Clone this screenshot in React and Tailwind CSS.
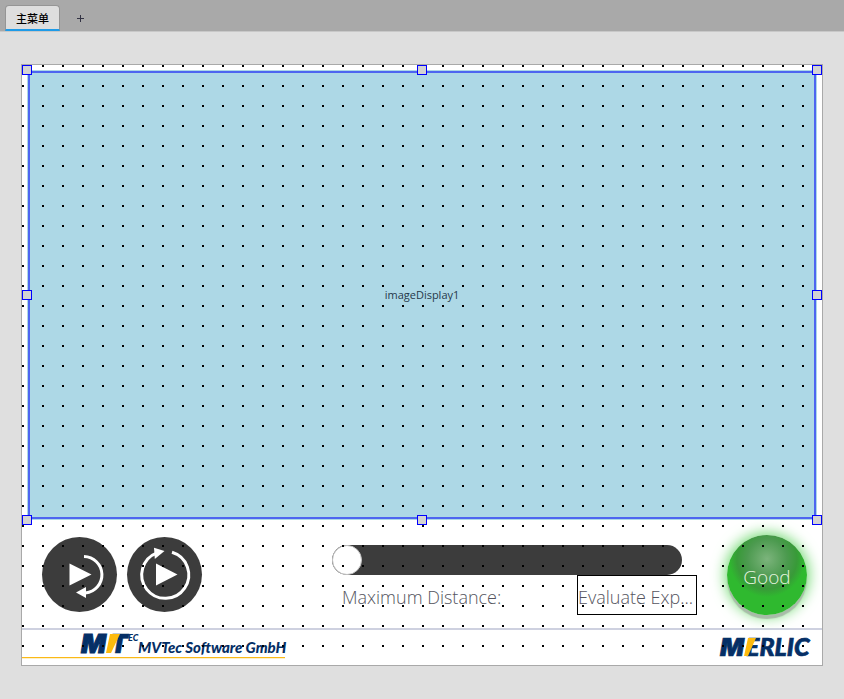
import React from 'react';
import clsx from 'clsx';

const HANDLES = [
  'left-0 top-0',
  'left-1/2 top-0',
  'left-full top-0',
  'left-0 top-1/2',
  'left-full top-1/2',
  'left-0 top-full',
  'left-1/2 top-full',
  'left-full top-full',
];

const TabBar = () => (
  <nav className="flex h-8 items-end border-b border-[#c8c8c8] bg-[#a9a9a9] px-[5px]">
    <button
      type="button"
      className="h-[26px] w-[55px] rounded-t border border-b-2 border-[#959595] border-b-[#1e9be8] bg-[#dedede] font-['Noto_Sans_CJK_SC',sans-serif] text-[11px] leading-4 font-medium text-black"
    >
      主菜单
    </button>
    <button
      type="button"
      aria-label="Add tab"
      className="ml-4 flex h-6 w-[10px] items-center justify-center text-[#333344]"
    >
      <svg width="8" height="8" viewBox="0 0 8 8" fill="none" stroke="currentColor">
        <path d="M3.5 0v7M0 3.5h7" />
      </svg>
    </button>
  </nav>
);

const ImageDisplay = () => (
  <div className="relative m-[5px] mb-0 h-[450px] bg-[#add8e6] p-px">
    <div className="flex h-full items-center justify-center border-2 border-[#4d65f0] font-['Open_Sans','Segoe_UI',sans-serif] text-[11px] text-[#26394a]">
      imageDisplay1
    </div>
    {HANDLES.map((pos) => (
      <span
        key={pos}
        className={clsx(
          'absolute z-20 size-[10px] -translate-x-1/2 -translate-y-1/2 border border-[#0000ff] bg-[#d3d3d3]',
          pos
        )}
      />
    ))}
  </div>
);

const RunOnceButton = () => (
  <button type="button" aria-label="Run once" className="size-[75px] rounded-full bg-[#3c3c3c]">
    <svg width="75" height="75" viewBox="0 0 75 75" fill="none">
      <path d="M27.5 26.5v22L49.5 37.5z" fill="#fff" />
      <path d="M42 19.5a18.3 18.3 0 0 1 1.5 36.5" stroke="#fff" strokeWidth="3" />
      <path d="M34 55.5l10-5.5v11z" fill="#fff" />
    </svg>
  </button>
);

const RunLoopButton = () => (
  <button type="button" aria-label="Run continuously" className="size-[75px] rounded-full bg-[#3c3c3c]">
    <svg width="75" height="75" viewBox="0 0 75 75" fill="none">
      <path d="M29 26.5v22L50.5 37.5z" fill="#fff" />
      <path d="M45 15.3A23.5 23.5 0 1 1 30 15.8" stroke="#fff" strokeWidth="3" />
      <path d="M27 10.7l10.5 3.3-9.7 8z" fill="#fff" />
    </svg>
  </button>
);

const DistanceControl = () => (
  <div className="ml-[130px] flex-1 pt-[25px] font-['Open_Sans','Segoe_UI',sans-serif] text-[18px] font-light text-[#555560]">
    <div className="pr-[15px]">
      <input
        id="distance"
        type="range"
        min="0"
        max="100"
        defaultValue="0"
        className="block h-[30px] w-full appearance-none rounded-full bg-[#3c3c3c] [&::-webkit-slider-thumb]:size-[30px] [&::-webkit-slider-thumb]:appearance-none [&::-webkit-slider-thumb]:rounded-full [&::-webkit-slider-thumb]:border [&::-webkit-slider-thumb]:border-[#c4c4c4] [&::-webkit-slider-thumb]:bg-white"
      />
    </div>
    <div className="flex h-10 items-center justify-between pl-[10px]">
      <label htmlFor="distance" className="pt-1">
        Maximum Distance:
      </label>
      <output
        htmlFor="distance"
        className="h-10 w-[120px] border border-black pt-1 leading-[34px] whitespace-nowrap"
      >
        Evaluate Exp...
      </output>
    </div>
  </div>
);

const StatusLed = () => (
  <div className="mt-[15px] mr-[15px] ml-[30px] flex size-20 items-center justify-center rounded-full bg-[radial-gradient(circle_at_50%_30%,#7cb47c_0,#4c9a4f_20px,#389a38_30px,#2fb92f_38px)] pt-1 font-['Open_Sans','Segoe_UI',sans-serif] text-[19px] font-light text-[#e8f5e0] shadow-[0_4px_1px_#a8bca8,0_0_14px_2px_#6fd86f]">
    Good
  </div>
);

const MvtecLogo = () => (
  <div className="mb-[7px] border-b border-[#fbb917] shadow-[0_1px_0_#fdf0c8]">
    <svg
      width="263"
      height="27"
      viewBox="0 0 263 27"
      fill="#052f66"
      className="block overflow-visible font-['Lato',sans-serif] font-black italic"
      role="img"
      aria-label="MVTec Software GmbH"
    >
      <g className="font-['Inter',sans-serif]" fontSize="26" stroke="#052f66">
        <text x="59" y="23">M</text>
        <text x="88" y="23" strokeWidth="0.5">T</text>
      </g>
      <path d="M88 4h10l-9 19h-5z" fill="#fdbb0e" />
      <text x="106" y="11" fontSize="9">EC</text>
      <text x="116" y="23" fontSize="15">MVTec Software GmbH</text>
    </svg>
  </div>
);

const MerlicLogo = () => (
  <svg
    width="92"
    height="30"
    viewBox="0 0 92 30"
    fill="#052f66"
    stroke="#052f66"
    strokeWidth="0.7"
    className="mr-[11px] overflow-visible font-['Lato',sans-serif] font-black italic"
    role="img"
    aria-label="MERLIC"
  >
    <text x="1" y="26" fontSize="25" className="font-['Inter',sans-serif]">M</text>
    <text x="27" y="26" fontSize="25">ERLIC</text>
    <path d="M29 8h8l-8 18h-4z" fill="#fdbb0e" stroke="none" />
  </svg>
);

const App = () => {
  return (
    <div className="min-h-screen bg-[#dfdfdf]">
      <TabBar />
      <main className="px-[21px] pt-8 pb-[33px]">
        <div className="relative border border-[#a9a9a9] bg-white">
          <ImageDisplay />

          {/* Controls */}
          <section className="flex h-[108px] items-start pl-5">
            <div className="flex gap-[10px] pt-[17px]">
              <RunOnceButton />
              <RunLoopButton />
            </div>
            <DistanceControl />
            <StatusLed />
          </section>

          {/* Logos */}
          <footer className="flex h-[37px] justify-between border-t-2 border-[#ced1e0]">
            <MvtecLogo />
            <MerlicLogo />
          </footer>

          {/* Snap grid */}
          <div className="pointer-events-none absolute inset-0 z-10 bg-[conic-gradient(from_270deg_at_2px_2px,#000_90deg,transparent_0)] bg-[size:20px_20px]" />
        </div>
      </main>
    </div>
  );
};

export default App;
